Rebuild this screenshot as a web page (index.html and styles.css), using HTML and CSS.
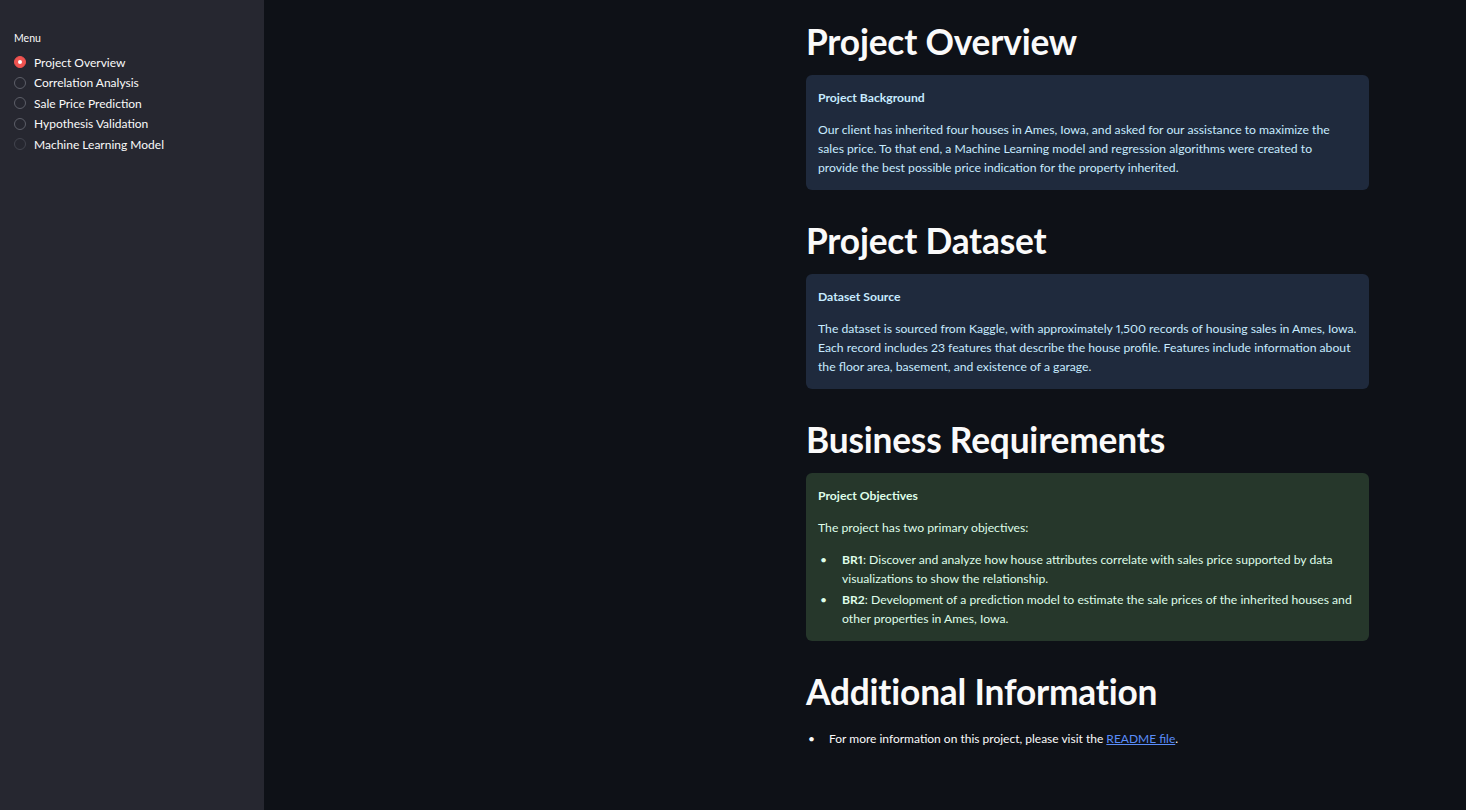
FILE: index.html
```html
<!DOCTYPE html>
<html lang="en">
<head>
<meta charset="utf-8">
<title>Project Overview</title>
<link rel="stylesheet" href="styles.css">
</head>
<body>
<div class="app">
  <aside class="sidebar">
    <div class="menu-label">Menu</div>
    <div class="radio-group">
      <label class="radio checked"><span class="dot"></span><span>Project Overview</span></label>
      <label class="radio"><span class="dot"></span><span>Correlation Analysis</span></label>
      <label class="radio"><span class="dot"></span><span>Sale Price Prediction</span></label>
      <label class="radio"><span class="dot"></span><span>Hypothesis Validation</span></label>
      <label class="radio dim"><span class="dot"></span><span>Machine Learning Model</span></label>
    </div>
  </aside>
  <main class="main">
    <div class="content">
      <section class="section">
        <h1>Project Overview</h1>
        <div class="alert info">
          <p class="alert-title">Project Background</p>
          <p>Our client has inherited four houses in Ames, Iowa, and asked for our assistance to maximize the sales price. To that end, a Machine Learning model and regression algorithms were created to provide&nbsp;the best possible price indication for the property inherited.</p>
        </div>
      </section>
      <section class="section">
        <h1>Project Dataset</h1>
        <div class="alert info">
          <p class="alert-title">Dataset Source</p>
          <p>The dataset is sourced from Kaggle, with approximately 1,500 records of housing sales in Ames, Iowa. Each record includes 23 features that describe the house profile. Features include information about the floor area, basement, and existence of a garage.</p>
        </div>
      </section>
      <section class="section">
        <h1>Business Requirements</h1>
        <div class="alert success">
          <p class="alert-title">Project Objectives</p>
          <p>The project has two primary objectives:</p>
          <ul class="list">
            <li><span><strong>BR1</strong>: Discover and analyze how house attributes correlate with sales price supported by data visualizations to show the relationship.</span></li>
            <li><span><strong>BR2</strong>: Development of a prediction model to estimate the sale prices of the inherited houses and other properties in Ames, Iowa.</span></li>
          </ul>
        </div>
      </section>
      <section class="section">
        <h1>Additional Information</h1>
        <ul class="list outer">
          <li><span>For more information on this project, please visit the <a href="#">README file</a>.</span></li>
        </ul>
      </section>
    </div>
  </main>
</div>
</body>
</html>
```

FILE: styles.css
```css
html, body {
  margin: 0;
  padding: 0;
  background: #0e1117;
}
body {
  font-family: Lato, "Noto Sans", "Liberation Sans", sans-serif;
  color: #fafafa;
  font-size: 12px;
  line-height: 19px;
  font-variant-numeric: proportional-nums;
}
.app {
  display: flex;
  min-height: 100vh;
}
.sidebar {
  width: 264px;
  flex: 0 0 264px;
  background: #262730;
  box-sizing: border-box;
  padding: 31px 14px 0 14px;
}
.menu-label {
  font-size: 10.5px;
  line-height: 14px;
  color: #fafafa;
}
.radio-group {
  margin-top: 7px;
  display: flex;
  flex-direction: column;
}
.radio {
  display: flex;
  align-items: center;
  gap: 8px;
  height: 20.5px;
  font-size: 12px;
  color: #fafafa;
}
.dot {
  width: 12px;
  height: 12px;
  box-sizing: border-box;
  border-radius: 50%;
  border: 1px solid #5c5e68;
  flex: 0 0 12px;
  display: flex;
  align-items: center;
  justify-content: center;
}
.radio.dim .dot {
  border-color: #42444e;
}
.radio.checked .dot {
  background: #ef5350;
  border-color: #ef5350;
}
.radio.checked .dot::after {
  content: "";
  width: 4px;
  height: 4px;
  border-radius: 50%;
  background: #fff;
}
.main {
  flex: 1;
  padding-top: 19.5px;
}
.content {
  width: 563px;
  margin-left: 542px;
}
h1 {
  margin: 0 0 12px 0;
  font-size: 35.3px;
  line-height: 43px;
  font-weight: 700;
  color: #fafafa;
  letter-spacing: -0.2px;
}
.section {
  margin-bottom: 29px;
}
.alert {
  border-radius: 6px;
  padding: 13.5px 12px 12.5px 12px;
  font-size: 12.2px;
}
.alert.info {
  background: #1f2a3d;
  color: #c7ebff;
}
.alert.success {
  background: #26372b;
  color: #dffde9;
}
.alert p {
  margin: 0 0 13px 0;
}
.alert p:last-child {
  margin-bottom: 0;
}
.alert-title {
  font-weight: 700;
}
.list {
  margin: 0;
  padding: 0 0 0 2px;
  list-style: none;
}
.list li {
  display: flex;
}
.list li + li {
  margin-top: 2px;
}
.list li::before {
  content: "\2022";
  flex: 0 0 22px;
}
.list.outer {
  padding-top: 4px;
}
.list.outer li::before {
  flex-basis: 21px;
}
a {
  color: #5a8dfa;
  text-decoration: underline;
}
```
